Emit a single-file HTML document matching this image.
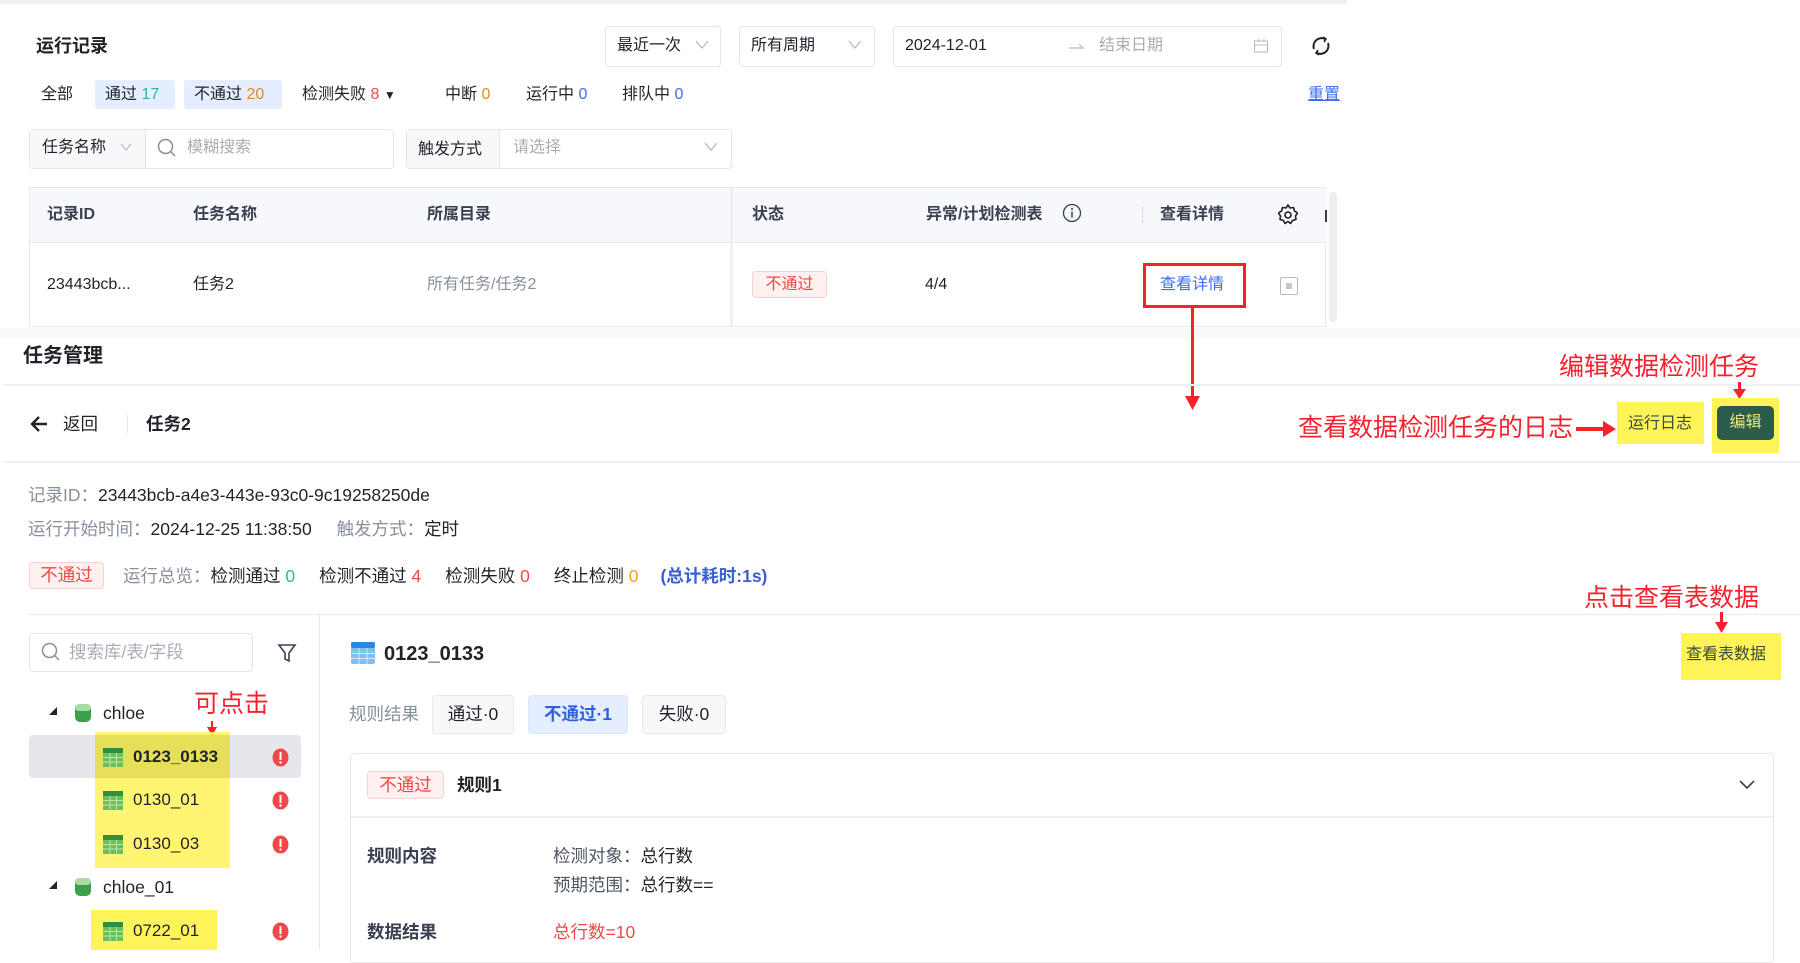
<!DOCTYPE html>
<html><head><meta charset="utf-8">
<style>
*{margin:0;padding:0;box-sizing:border-box}
body{width:1800px;height:950px;position:relative;overflow:hidden;background:#fff;font-family:"Liberation Sans","Noto Sans CJK SC",sans-serif;font-size:16px;color:#1f2329}
.a{position:absolute;white-space:nowrap}
.t{position:absolute;white-space:nowrap;line-height:20px}
.box{position:absolute;border:1px solid #e3e5ea;border-radius:4px;background:#fff}
.g{color:#86909c}
.b{font-weight:bold}
.blue{color:#3d6cf0}
.red{color:#f04848}
.ann{position:absolute;white-space:nowrap;color:#f5222d;font-size:25px;line-height:30px}
.yel{position:absolute;background:#fff35a}
.tag{position:absolute;border:1px solid #fbd0d0;background:#fff1f0;color:#f04848;border-radius:4px;text-align:center}
.f17{font-size:17.5px}
</style></head><body>

<div class="a" style="left:0;top:0;width:1347px;height:4px;background:#eff0f4"></div>

<div class="t b" style="left:36px;top:36px;font-size:18px">运行记录</div>

<div class="box" style="left:605px;top:26px;width:116px;height:41px"></div>
<div class="t" style="left:617px;top:36px">最近一次</div>
<svg class="a" style="left:695px;top:40px" width="14" height="10"><path d="M1 1l6 7 6-7" fill="none" stroke="#b5b9c2" stroke-width="1.3"/></svg>
<div class="box" style="left:739px;top:26px;width:136px;height:41px"></div>
<div class="t" style="left:751px;top:36px">所有周期</div>
<svg class="a" style="left:848px;top:40px" width="14" height="10"><path d="M1 1l6 7 6-7" fill="none" stroke="#b5b9c2" stroke-width="1.3"/></svg>
<div class="box" style="left:893px;top:26px;width:389px;height:41px"></div>
<div class="t" style="left:905px;top:36px">2024-12-01</div>
<svg class="a" style="left:1068px;top:42px" width="16" height="8"><path d="M1 6h14l-4-4" fill="none" stroke="#b5b9c2" stroke-width="1.2"/></svg>
<div class="t" style="left:1099px;top:36px;color:#a8adb6">结束日期</div>
<svg class="a" style="left:1253px;top:38px" width="16" height="16"><rect x="1.5" y="3" width="13" height="11" fill="none" stroke="#b5b9c2"/><path d="M1.5 7h13M5 1v3M11 1v3" stroke="#b5b9c2"/></svg>
<svg class="a" style="left:1310px;top:35px" width="22" height="22"><path d="M4 14a8 8 0 0 1 11-10M18 8a8 8 0 0 1-11 10" fill="none" stroke="#1f2329" stroke-width="2"/><path d="M13 2l3 2-2 3M9 20l-3-2 2-3" fill="none" stroke="#1f2329" stroke-width="1.6"/></svg>

<div class="t" style="left:41px;top:85px">全部</div>
<div class="a" style="left:95px;top:80px;width:80px;height:29px;background:#e4eeff;border-radius:3px"></div>
<div class="t" style="left:105px;top:85px">通过 <span style="color:#2cb5a0">17</span></div>
<div class="a" style="left:184px;top:80px;width:98px;height:29px;background:#e4eeff;border-radius:3px"></div>
<div class="t" style="left:194px;top:85px">不通过 <span style="color:#e0891f">20</span></div>
<div class="t" style="left:302px;top:85px">检测失败 <span class="red">8</span> <span style="font-size:12px">▼</span></div>
<div class="t" style="left:445px;top:85px">中断 <span style="color:#e0891f">0</span></div>
<div class="t" style="left:526px;top:85px">运行中 <span class="blue">0</span></div>
<div class="t" style="left:622px;top:85px">排队中 <span class="blue">0</span></div>
<div class="t blue" style="left:1308px;top:85px;text-decoration:underline">重置</div>

<div class="box" style="left:29px;top:129px;width:365px;height:40px"></div>
<div class="a" style="left:30px;top:130px;width:116px;height:38px;background:#f7f8fa;border-right:1px solid #e3e5ea"></div>
<div class="t" style="left:42px;top:138px">任务名称</div>
<svg class="a" style="left:120px;top:143px" width="12" height="9"><path d="M1 1l5 6 5-6" fill="none" stroke="#b5b9c2" stroke-width="1.2"/></svg>
<svg class="a" style="left:157px;top:138px" width="20" height="20"><circle cx="8.5" cy="8.5" r="7" fill="none" stroke="#86909c" stroke-width="1.5"/><path d="M14 14l4 4" stroke="#86909c" stroke-width="1.5"/></svg>
<div class="t" style="left:187px;top:138px;color:#a8adb6">模糊搜索</div>
<div class="box" style="left:406px;top:129px;width:326px;height:40px"></div>
<div class="a" style="left:407px;top:130px;width:93px;height:38px;background:#f7f8fa;border-right:1px solid #e3e5ea"></div>
<div class="t" style="left:418px;top:140px">触发方式</div>
<div class="t" style="left:513px;top:138px;color:#a8adb6">请选择</div>
<svg class="a" style="left:704px;top:142px" width="14" height="10"><path d="M1 1l6 7 6-7" fill="none" stroke="#b5b9c2" stroke-width="1.3"/></svg>

<div class="a" style="left:29px;top:187px;width:1297px;height:140px;border:1px solid #e8eaef;border-bottom:none"></div>
<div class="a" style="left:30px;top:188px;width:1296px;height:55px;background:#f7f8fb;border-bottom:1px solid #e8eaef"></div>
<div class="a" style="left:730px;top:188px;width:3px;height:138px;background:#eef0f3"></div>
<div class="t b" style="left:47px;top:205px;color:#394150">记录ID</div>
<div class="t b" style="left:193px;top:205px;color:#394150">任务名称</div>
<div class="t b" style="left:427px;top:205px;color:#394150">所属目录</div>
<div class="t b" style="left:752px;top:205px;color:#394150">状态</div>
<div class="t b" style="left:926px;top:205px;color:#394150">异常/计划检测表</div>
<svg class="a" style="left:1062px;top:203px" width="20" height="20"><circle cx="10" cy="10" r="8.5" fill="none" stroke="#394150" stroke-width="1.3"/><path d="M10 8.5v6" stroke="#394150" stroke-width="1.5"/><circle cx="10" cy="6" r="1" fill="#394150"/></svg>
<div class="a" style="left:1142px;top:207px;width:1px;height:16px;border-left:1px dashed #d0d3d9"></div>
<div class="t b" style="left:1160px;top:205px;color:#394150">查看详情</div>
<svg class="a" style="left:1278px;top:204px" width="20" height="22"><path d="M10 1l2 3 3.5-.5 1 3.5 3 2-2 3 .5 3.5-3.5 1-2 3-2.5-2-3 2-1.5-3-3.5-1 .5-3.5-2-3 3-2 1-3.5L8 4z" fill="none" stroke="#1f2329" stroke-width="1.6" stroke-linejoin="round"/><circle cx="10" cy="11" r="3" fill="none" stroke="#1f2329" stroke-width="1.6"/></svg>
<div class="a" style="left:1325px;top:210px;width:2px;height:12px;background:#394150"></div>
<div class="a" style="left:1329px;top:192px;width:8px;height:130px;background:#eceef2;border-radius:4px"></div>

<div class="t" style="left:47px;top:275px">23443bcb...</div>
<div class="t" style="left:193px;top:275px">任务2</div>
<div class="t g" style="left:427px;top:275px">所有任务/任务2</div>
<div class="tag" style="left:752px;top:271px;width:75px;height:27px;line-height:25px">不通过</div>
<div class="t" style="left:925px;top:275px">4/4</div>
<div class="a" style="left:1143px;top:263px;width:103px;height:45px;border:3px solid #f5222d"></div>
<div class="t blue" style="left:1160px;top:275px">查看详情</div>
<div class="a" style="left:1280px;top:277px;width:18px;height:18px;border:1px solid #b5b9c2;border-radius:2px"></div>
<div class="a" style="left:1286px;top:283px;width:6px;height:6px;background:#c4c8cf"></div>
<div class="a" style="left:30px;top:326px;width:1297px;height:1px;background:#e8eaef"></div>
<div class="a" style="left:0;top:328px;width:1800px;height:10px;background:#f9f9fb"></div>

<div class="a" style="left:1191px;top:308px;width:3px;height:92px;background:#f5222d"></div>
<svg class="a" style="left:1185px;top:396px" width="15" height="14"><path d="M0 0h15L7.5 14z" fill="#f5222d"/></svg>

<div class="t b" style="left:23px;top:344px;font-size:20px;line-height:24px">任务管理</div>
<div class="a" style="left:3px;top:384px;width:1797px;height:2px;background:#eff0f3"></div>
<svg class="a" style="left:29px;top:414px" width="20" height="20"><path d="M18 10H3M10 3l-7 7 7 7" fill="none" stroke="#1f2329" stroke-width="2.4"/></svg>
<div class="t f17" style="left:63px;top:414px">返回</div>
<div class="a" style="left:127px;top:415px;width:1px;height:18px;background:#e3e5ea"></div>
<div class="t b f17" style="left:146px;top:414px">任务2</div>
<div class="a" style="left:3px;top:461px;width:1797px;height:2px;background:#eff0f3"></div>

<div class="ann" style="left:1559px;top:352px">编辑数据检测任务</div>
<div class="a" style="left:1738px;top:382px;width:3px;height:10px;background:#f5222d"></div>
<svg class="a" style="left:1733px;top:389px" width="13" height="10"><path d="M0 0h13L6.5 10z" fill="#f5222d"/></svg>
<div class="ann" style="left:1298px;top:413px">查看数据检测任务的日志</div>
<div class="a" style="left:1576px;top:427px;width:30px;height:4px;background:#f5222d"></div>
<svg class="a" style="left:1603px;top:421px" width="13" height="16"><path d="M0 0l13 8L0 16z" fill="#f5222d"/></svg>
<div class="yel" style="left:1617px;top:402px;width:87px;height:42px"></div>
<div class="t" style="left:1628px;top:414px;color:#3a4a3a">运行日志</div>
<div class="yel" style="left:1712px;top:398px;width:67px;height:55px"></div>
<div class="a" style="left:1717px;top:406px;width:57px;height:34px;background:#2c5a4b;border-radius:5px;color:#e9e77a;text-align:center;line-height:34px">编辑</div>

<div class="t f17" style="left:28px;top:485px"><span class="g">记录ID：</span>23443bcb-a4e3-443e-93c0-9c19258250de</div>
<div class="t f17" style="left:28px;top:519px"><span class="g">运行开始时间：</span>2024-12-25 11:38:50 <span class="g" style="margin-left:20px">触发方式：</span>定时</div>
<div class="tag f17" style="left:29px;top:562px;width:75px;height:27px;line-height:25px">不通过</div>
<div class="t f17" style="left:123px;top:566px"><span class="g">运行总览：</span>检测通过 <span style="color:#2cb5a0">0</span><span style="margin-left:24px">检测不通过 <span class="red">4</span></span><span style="margin-left:24px">检测失败 <span class="red">0</span></span><span style="margin-left:24px">终止检测 <span style="color:#f0a020">0</span></span><span class="b" style="margin-left:22px;color:#3a5fd0">(总计耗时:1s)</span></div>
<div class="a" style="left:28px;top:614px;width:1772px;height:1px;background:#e8eaef"></div>
<div class="a" style="left:319px;top:614px;width:1px;height:336px;background:#e8eaef"></div>

<div class="ann" style="left:1584px;top:583px">点击查看表数据</div>
<div class="a" style="left:1720px;top:612px;width:3px;height:14px;background:#f5222d"></div>
<svg class="a" style="left:1715px;top:622px" width="13" height="11"><path d="M0 0h13L6.5 11z" fill="#f5222d"/></svg>
<div class="yel" style="left:1681px;top:633px;width:100px;height:47px"></div>
<div class="t" style="left:1686px;top:645px;color:#3a4a3a">查看表数据</div>

<div class="box" style="left:29px;top:633px;width:224px;height:39px"></div>
<svg class="a" style="left:41px;top:642px" width="20" height="20"><circle cx="8.5" cy="8.5" r="7" fill="none" stroke="#86909c" stroke-width="1.5"/><path d="M14 14l4 4" stroke="#86909c" stroke-width="1.5"/></svg>
<div class="t f17" style="left:69px;top:642px;color:#a8adb6">搜索库/表/字段</div>
<svg class="a" style="left:277px;top:643px" width="20" height="20"><path d="M2 2h16l-6 8v8l-4-2v-6z" fill="none" stroke="#394150" stroke-width="1.6"/></svg>

<svg class="a" style="left:48px;top:706px" width="10" height="10"><path d="M9 1v8H1z" fill="#1f2329"/></svg>
<svg class="a" style="left:74px;top:703px" width="18" height="20"><rect x="1" y="1" width="16" height="18" rx="5" fill="#3aa04a"/><rect x="1" y="1" width="16" height="7" rx="4" fill="#a9dba6"/></svg>
<div class="t f17" style="left:103px;top:703px">chloe</div>
<div class="ann" style="left:194px;top:689px">可点击</div>
<div class="a" style="left:211px;top:721px;width:2px;height:8px;background:#f5222d"></div>
<svg class="a" style="left:207px;top:727px" width="10" height="9"><path d="M0 0h10L5 9z" fill="#f5222d"/></svg>

<div class="a" style="left:29px;top:735px;width:272px;height:43px;background:#e5e7ed;border-radius:4px"></div>
<div class="a" style="left:95px;top:732px;width:135px;height:136px;background:#fff35a;opacity:.85"></div>
<div class="a" style="left:95px;top:735px;width:135px;height:43px;background:#e6df58"></div>

<svg class="a" style="left:103px;top:748px" width="20" height="19"><rect width="20" height="19" fill="#6cbf5a"/><rect width="20" height="5" fill="#2e8f3e"/><path d="M0 9.5h20M0 14h20M7 5v14M13.5 5v14" stroke="#bfe5a8" stroke-width="1"/></svg>
<div class="t b" style="left:133px;top:747px;font-size:17px">0123_0133</div>
<svg class="a" style="left:272px;top:748px" width="17" height="19"><ellipse cx="8.5" cy="9.5" rx="8" ry="9" fill="#f04848"/><rect x="7.5" y="4" width="2" height="8" fill="#fff"/><circle cx="8.5" cy="14.5" r="1.2" fill="#fff"/></svg>

<svg class="a" style="left:103px;top:791px" width="20" height="19"><rect width="20" height="19" fill="#6cbf5a"/><rect width="20" height="5" fill="#2e8f3e"/><path d="M0 9.5h20M0 14h20M7 5v14M13.5 5v14" stroke="#bfe5a8" stroke-width="1"/></svg>
<div class="t" style="left:133px;top:790px;font-size:17px">0130_01</div>
<svg class="a" style="left:272px;top:791px" width="17" height="19"><ellipse cx="8.5" cy="9.5" rx="8" ry="9" fill="#f04848"/><rect x="7.5" y="4" width="2" height="8" fill="#fff"/><circle cx="8.5" cy="14.5" r="1.2" fill="#fff"/></svg>

<svg class="a" style="left:103px;top:835px" width="20" height="19"><rect width="20" height="19" fill="#6cbf5a"/><rect width="20" height="5" fill="#2e8f3e"/><path d="M0 9.5h20M0 14h20M7 5v14M13.5 5v14" stroke="#bfe5a8" stroke-width="1"/></svg>
<div class="t" style="left:133px;top:834px;font-size:17px">0130_03</div>
<svg class="a" style="left:272px;top:835px" width="17" height="19"><ellipse cx="8.5" cy="9.5" rx="8" ry="9" fill="#f04848"/><rect x="7.5" y="4" width="2" height="8" fill="#fff"/><circle cx="8.5" cy="14.5" r="1.2" fill="#fff"/></svg>

<svg class="a" style="left:48px;top:880px" width="10" height="10"><path d="M9 1v8H1z" fill="#1f2329"/></svg>
<svg class="a" style="left:74px;top:877px" width="18" height="20"><rect x="1" y="1" width="16" height="18" rx="5" fill="#3aa04a"/><rect x="1" y="1" width="16" height="7" rx="4" fill="#a9dba6"/></svg>
<div class="t f17" style="left:103px;top:877px">chloe_01</div>

<div class="yel" style="left:91px;top:910px;width:126px;height:40px"></div>
<svg class="a" style="left:103px;top:922px" width="20" height="19"><rect width="20" height="19" fill="#6cbf5a"/><rect width="20" height="5" fill="#2e8f3e"/><path d="M0 9.5h20M0 14h20M7 5v14M13.5 5v14" stroke="#bfe5a8" stroke-width="1"/></svg>
<div class="t" style="left:133px;top:921px;font-size:17px">0722_01</div>
<svg class="a" style="left:272px;top:922px" width="17" height="19"><ellipse cx="8.5" cy="9.5" rx="8" ry="9" fill="#f04848"/><rect x="7.5" y="4" width="2" height="8" fill="#fff"/><circle cx="8.5" cy="14.5" r="1.2" fill="#fff"/></svg>

<svg class="a" style="left:351px;top:642px" width="24" height="22"><rect width="24" height="22" rx="2" fill="#7ec0f0"/><rect width="24" height="6" rx="2" fill="#2f86e0"/><path d="M0 11.5h24M0 16.5h24M8 6v16M16 6v16" stroke="#d6ecfb" stroke-width="1"/></svg>
<div class="t b" style="left:384px;top:643px;font-size:20px;line-height:22px">0123_0133</div>

<div class="t g f17" style="left:349px;top:704px">规则结果</div>
<div class="a f17" style="left:432px;top:695px;width:82px;height:39px;border:1px solid #e6e8ed;background:#f7f8fa;border-radius:4px;text-align:center;line-height:37px">通过·0</div>
<div class="a f17" style="left:528px;top:695px;width:100px;height:39px;border:1px solid #dbe7ff;background:#e4eeff;border-radius:4px;text-align:center;line-height:37px;color:#2f5fe0;font-weight:bold">不通过·1</div>
<div class="a f17" style="left:642px;top:695px;width:84px;height:39px;border:1px solid #e6e8ed;background:#f7f8fa;border-radius:4px;text-align:center;line-height:37px">失败·0</div>

<div class="a" style="left:350px;top:753px;width:1424px;height:210px;border:1px solid #e6e8ed;border-radius:4px"></div>
<div class="a" style="left:351px;top:816px;width:1422px;height:2px;background:#eceef2"></div>
<div class="tag f17" style="left:367px;top:771px;width:77px;height:28px;line-height:26px">不通过</div>
<div class="t b f17" style="left:457px;top:775px">规则1</div>
<svg class="a" style="left:1739px;top:779px" width="16" height="11"><path d="M1 2l7 7 7-7" fill="none" stroke="#394150" stroke-width="1.6"/></svg>

<div class="t b f17" style="left:367px;top:846px;color:#394150">规则内容</div>
<div class="t f17" style="left:553px;top:846px"><span style="color:#4e5562">检测对象：</span>总行数</div>
<div class="t f17" style="left:553px;top:875px"><span style="color:#4e5562">预期范围：</span>总行数==</div>
<div class="t b f17" style="left:367px;top:922px;color:#394150">数据结果</div>
<div class="t red f17" style="left:553px;top:922px">总行数=10</div>

</body></html>
